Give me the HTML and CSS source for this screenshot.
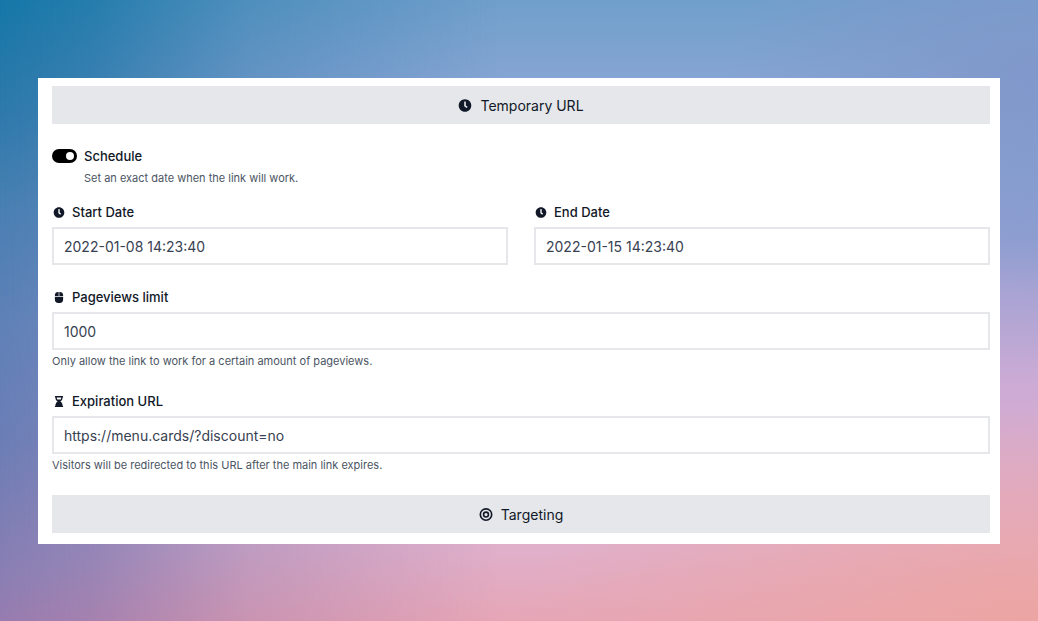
FILE: index.html
```html
<!DOCTYPE html>
<html lang="en">
<head>
    <meta charset="UTF-8">
    <meta name="viewport" content="width=device-width, initial-scale=1.0">
    <title>Temporary URL</title>
    <link rel="stylesheet" href="styles.css">
</head>
<body>
    <form class="panel">
        <button type="button" class="section-button">
            <svg class="icon" viewBox="0 0 512 512" aria-hidden="true"><path d="M256,8C119,8,8,119,8,256S119,504,256,504,504,393,504,256,393,8,256,8Zm92.49,313h0l-20,25a16,16,0,0,1-22.49,2.5h0l-67-49.72a40,40,0,0,1-15-31.23V112a16,16,0,0,1,16-16h32a16,16,0,0,1,16,16V256l58,42.5A16,16,0,0,1,348.49,321Z"/></svg>
            Temporary URL
        </button>

        <div class="schedule">
            <input type="checkbox" class="switch" id="schedule" checked>
            <label for="schedule">Schedule</label>
            <p class="help">Set an exact date when the link will work.</p>
        </div>

        <div class="row">
            <div class="form-group">
                <label for="start_date">
                    <svg class="icon" viewBox="0 0 512 512" aria-hidden="true"><path d="M256,8C119,8,8,119,8,256S119,504,256,504,504,393,504,256,393,8,256,8Zm92.49,313h0l-20,25a16,16,0,0,1-22.49,2.5h0l-67-49.72a40,40,0,0,1-15-31.23V112a16,16,0,0,1,16-16h32a16,16,0,0,1,16,16V256l58,42.5A16,16,0,0,1,348.49,321Z"/></svg>
                    Start Date
                </label>
                <input type="text" id="start_date" name="start_date" value="2022-01-08 14:23:40">
            </div>
            <div class="form-group">
                <label for="end_date">
                    <svg class="icon" viewBox="0 0 512 512" aria-hidden="true"><path d="M256,8C119,8,8,119,8,256S119,504,256,504,504,393,504,256,393,8,256,8Zm92.49,313h0l-20,25a16,16,0,0,1-22.49,2.5h0l-67-49.72a40,40,0,0,1-15-31.23V112a16,16,0,0,1,16-16h32a16,16,0,0,1,16,16V256l58,42.5A16,16,0,0,1,348.49,321Z"/></svg>
                    End Date
                </label>
                <input type="text" id="end_date" name="end_date" value="2022-01-15 14:23:40">
            </div>
        </div>

        <div class="form-group">
            <label for="pageviews_limit">
                <svg class="icon" viewBox="0 0 384 512" aria-hidden="true"><path d="M0 352a160 160 0 0 0 160 160h64a160 160 0 0 0 160-160V216H0zM176 0h-16A160 160 0 0 0 0 160v24h176zm32 0v184h176v-24A160 160 0 0 0 224 0z"/></svg>
                Pageviews limit
            </label>
            <input type="text" inputmode="numeric" id="pageviews_limit" name="pageviews_limit" value="1000">
            <p class="help">Only allow the link to work for a certain amount of pageviews.</p>
        </div>

        <div class="form-group">
            <label for="expiration_url">
                <svg class="icon" viewBox="0 0 384 512" aria-hidden="true"><path fill-rule="evenodd" d="M24 0H360a24 24 0 0 1 24 24V40a24 24 0 0 1-24 24C360 155 312 232 245 256C312 280 360 357 360 448a24 24 0 0 1 24 24v16a24 24 0 0 1-24 24H24a24 24 0 0 1-24-24V472a24 24 0 0 1 24-24C24 357 72 280 139 256C72 232 24 155 24 64A24 24 0 0 1 0 40V24A24 24 0 0 1 24 0ZM88 64C88 105 98 140 116 168H268C286 140 296 105 296 64Z"/></svg>
                Expiration URL
            </label>
            <input type="url" id="expiration_url" name="expiration_url" value="https://menu.cards/?discount=no">
            <p class="help">Visitors will be redirected to this URL after the main link expires.</p>
        </div>

        <button type="button" class="section-button">
            <svg class="icon" viewBox="0 0 24 24" aria-hidden="true"><g fill="none" stroke="#111827" stroke-width="3"><circle cx="12" cy="12" r="10.5"/><circle cx="12" cy="12" r="4.5"/></g></svg>
            Targeting
        </button>
    </form>
</body>
</html>
```
FILE: styles.css
```css
* {
    box-sizing: border-box;
}
body {
    position: relative;
    margin: 0;
    padding: 78px 38px;
    min-height: 100vh;
    font-family: Inter, sans-serif;
    color: #111827;
    background:
        radial-gradient(ellipse 50% 35% at 100% 100%, #eca5a3 0%, rgba(236, 165, 163, 0) 100%),
        radial-gradient(ellipse 30% 35% at 100% 12%, #8098cb 0%, rgba(128, 152, 203, 0) 100%),
        linear-gradient(180deg, #709fcb 0%, #86a5d4 13%, #929fd2 38%, #cdabd5 62%, #dcadcc 80%, #e0b0cb 88%, #e6a6b6 100%);
}
/* darker left side, fades out towards the middle */
body::before {
    content: "";
    position: absolute;
    inset: 0;
    background: linear-gradient(172deg, #1577a7 0%, #2e79ab 15%, #4a7fb2 28%, #5e81b7 42%, #6b7db5 58%, #8a7eb3 75%, #a878a9 89%, #a5729a 100%);
    -webkit-mask-image: linear-gradient(90deg, #000 0%, rgba(0, 0, 0, 0.85) 9%, rgba(0, 0, 0, 0.4) 24%, transparent 48%);
    mask-image: linear-gradient(90deg, #000 0%, rgba(0, 0, 0, 0.85) 9%, rgba(0, 0, 0, 0.4) 24%, transparent 48%);
}
.panel {
    position: relative;
    display: flex;
    flex-direction: column;
    gap: 22px;
    padding: 8px 10px 11px 14px;
    background: #fff;
}
.section-button {
    display: flex;
    align-items: center;
    justify-content: center;
    gap: 8px;
    width: 100%;
    height: 38px;
    border: none;
    background-color: #e5e7eb;
    color: #111827;
    font-family: inherit;
    font-size: 14px;
    cursor: pointer;
}
.icon {
    width: 14px;
    height: 11px;
    fill: #111827;
}
.section-button .icon {
    height: 13px;
}
label {
    display: flex;
    align-items: center;
    gap: 6px;
    font-size: 13px;
    line-height: 20px;
    font-weight: 500;
}
.schedule {
    display: grid;
    grid-template-columns: auto 1fr;
    align-items: center;
    column-gap: 7px;
    row-gap: 4px;
    margin-bottom: -6px;
}
.schedule .help {
    grid-column: 2;
    margin: 0;
}
.switch {
    appearance: none;
    display: flex;
    align-items: center;
    width: 25px;
    height: 14px;
    margin: 0;
    padding: 3px;
    border-radius: 7px;
    background-color: #9ca3af;
    cursor: pointer;
}
.switch::before {
    content: "";
    width: 8px;
    height: 8px;
    border-radius: 50%;
    background-color: #fff;
}
.switch:checked {
    justify-content: flex-end;
    background-color: #000;
}
.row {
    display: grid;
    grid-template-columns: 1fr 1fr;
    gap: 26px;
}
.form-group input {
    display: block;
    width: 100%;
    height: 38px;
    margin-top: 5px;
    padding: 0 10px;
    border: 2px solid #e5e7eb;
    border-radius: 0;
    background: #fff;
    color: #374151;
    font-family: inherit;
    font-size: 14px;
}
.help {
    margin: 3px 0 0;
    font-size: 11px;
    line-height: 16px;
    color: #4b5563;
}
```
